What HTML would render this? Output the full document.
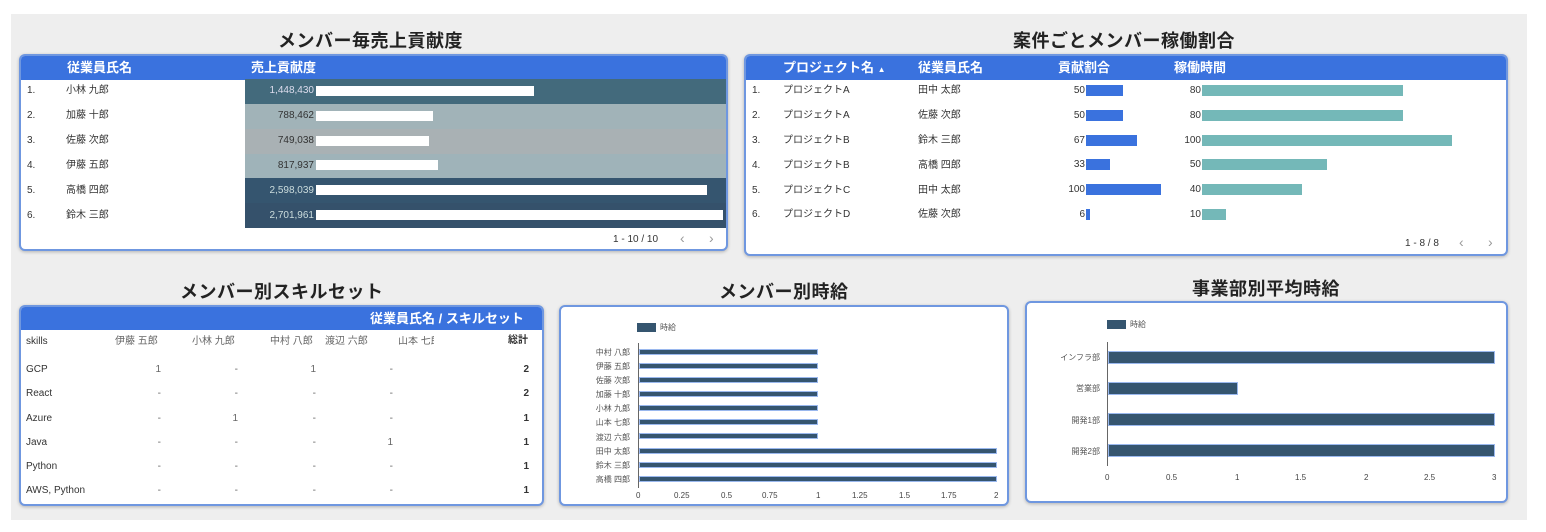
<!DOCTYPE html>
<html><head><meta charset="utf-8"><style>
*{margin:0;padding:0;box-sizing:border-box}
body{width:1546px;height:532px;background:#fff;position:relative;overflow:hidden;font-family:"Liberation Sans","Noto Sans CJK JP",sans-serif;color:#333}
.a{position:absolute;white-space:nowrap}
.bg{left:11px;top:14px;width:1516px;height:506px;background:#eeeeee}
.panel{background:#fff;border:2px solid #6f97e0;border-radius:6px;box-shadow:0 1px 3px rgba(0,0,0,.25);overflow:hidden}
.hd{background:#3a72de;color:#fff;font-weight:bold;font-size:13px}
.t{font-size:18px;font-weight:bold;color:#222;letter-spacing:0.5px}
.s{font-size:10px;color:#333;line-height:12px}
.r{text-align:right}
.h{color:#fff;font-weight:bold;font-size:13px;line-height:16px}
</style></head><body>
<div class="a bg"></div>

<div class="a t" style="left:278px;top:27px">メンバー毎売上貢献度</div>
<div class="a t" style="left:1013px;top:27px">案件ごとメンバー稼働割合</div>
<div class="a t" style="left:180px;top:278px">メンバー別スキルセット</div>
<div class="a t" style="left:719px;top:278px">メンバー別時給</div>
<div class="a t" style="left:1192px;top:275px">事業部別平均時給</div>

<!-- panel 1 -->
<div class="a panel" style="left:19px;top:54px;width:709px;height:197px">
 <div class="a hd" style="left:0;top:0;width:709px;height:24px"></div>
</div>
<div class="a h" style="left:67px;top:60px">従業員氏名</div>
<div class="a h" style="left:251px;top:60px">売上貢献度</div>
<div class="a" style="left:245px;top:79px;width:481px;height:25px;background:#436a7c"></div>
<div class="a" style="left:245px;top:104px;width:481px;height:25px;background:#a1b3b8"></div>
<div class="a" style="left:245px;top:129px;width:481px;height:25px;background:#a9b1b4"></div>
<div class="a" style="left:245px;top:154px;width:481px;height:24px;background:#9fb3b9"></div>
<div class="a" style="left:245px;top:178px;width:481px;height:25px;background:#35556f"></div>
<div class="a" style="left:245px;top:203px;width:481px;height:25px;background:#35516b"></div>
<div class="a s" style="left:27px;top:85px">1.</div><div class="a s" style="left:66px;top:85px">小林 九郎</div>
<div class="a s" style="left:27px;top:110px">2.</div><div class="a s" style="left:66px;top:110px">加藤 十郎</div>
<div class="a s" style="left:27px;top:135px">3.</div><div class="a s" style="left:66px;top:135px">佐藤 次郎</div>
<div class="a s" style="left:27px;top:160px">4.</div><div class="a s" style="left:66px;top:160px">伊藤 五郎</div>
<div class="a s" style="left:27px;top:185px">5.</div><div class="a s" style="left:66px;top:185px">高橋 四郎</div>
<div class="a s" style="left:27px;top:210px">6.</div><div class="a s" style="left:66px;top:210px">鈴木 三郎</div>
<div class="a s r" style="left:245px;width:69px;top:85px;color:#dde">1,448,430</div>
<div class="a s r" style="left:245px;width:69px;top:110px">788,462</div>
<div class="a s r" style="left:245px;width:69px;top:135px">749,038</div>
<div class="a s r" style="left:245px;width:69px;top:160px">817,937</div>
<div class="a s r" style="left:245px;width:69px;top:185px;color:#cdd">2,598,039</div>
<div class="a s r" style="left:245px;width:69px;top:210px;color:#cdd">2,701,961</div>
<div class="a" style="left:316px;top:86px;width:218px;height:10px;background:#fff"></div>
<div class="a" style="left:316px;top:111px;width:117px;height:10px;background:#fff"></div>
<div class="a" style="left:316px;top:136px;width:113px;height:10px;background:#fff"></div>
<div class="a" style="left:316px;top:160px;width:122px;height:10px;background:#fff"></div>
<div class="a" style="left:316px;top:185px;width:391px;height:10px;background:#fff"></div>
<div class="a" style="left:316px;top:210px;width:407px;height:10px;background:#fff"></div>
<div class="a s" style="left:613px;top:234px">1 - 10 / 10</div>
<div class="a" style="left:680px;top:230px;font-size:14px;color:#999">‹</div>
<div class="a" style="left:709px;top:230px;font-size:14px;color:#999">›</div>

<!-- panel 2 -->
<div class="a panel" style="left:744px;top:54px;width:764px;height:202px">
 <div class="a hd" style="left:0;top:0;width:764px;height:24px"></div>
</div>
<div class="a h" style="left:783px;top:60px">プロジェクト名 <span style="font-size:8px">▲</span></div>
<div class="a h" style="left:918px;top:60px">従業員氏名</div>
<div class="a h" style="left:1058px;top:60px">貢献割合</div>
<div class="a h" style="left:1174px;top:60px">稼働時間</div>
<div class="a s" style="left:752px;top:85px">1.</div><div class="a s" style="left:783px;top:85px">プロジェクトA</div><div class="a s" style="left:918px;top:85px">田中 太郎</div>
<div class="a s" style="left:752px;top:110px">2.</div><div class="a s" style="left:783px;top:110px">プロジェクトA</div><div class="a s" style="left:918px;top:110px">佐藤 次郎</div>
<div class="a s" style="left:752px;top:135px">3.</div><div class="a s" style="left:783px;top:135px">プロジェクトB</div><div class="a s" style="left:918px;top:135px">鈴木 三郎</div>
<div class="a s" style="left:752px;top:160px">4.</div><div class="a s" style="left:783px;top:160px">プロジェクトB</div><div class="a s" style="left:918px;top:160px">高橋 四郎</div>
<div class="a s" style="left:752px;top:185px">5.</div><div class="a s" style="left:783px;top:185px">プロジェクトC</div><div class="a s" style="left:918px;top:185px">田中 太郎</div>
<div class="a s" style="left:752px;top:209px">6.</div><div class="a s" style="left:783px;top:209px">プロジェクトD</div><div class="a s" style="left:918px;top:209px">佐藤 次郎</div>
<div class="a s r" style="left:1044px;width:41px;top:85px">50</div>
<div class="a s r" style="left:1044px;width:41px;top:110px">50</div>
<div class="a s r" style="left:1044px;width:41px;top:135px">67</div>
<div class="a s r" style="left:1044px;width:41px;top:159px">33</div>
<div class="a s r" style="left:1044px;width:41px;top:184px">100</div>
<div class="a s r" style="left:1044px;width:41px;top:209px">6</div>
<div class="a" style="left:1086px;top:85px;width:37px;height:11px;background:#3a72de"></div>
<div class="a" style="left:1086px;top:110px;width:37px;height:11px;background:#3a72de"></div>
<div class="a" style="left:1086px;top:135px;width:51px;height:11px;background:#3a72de"></div>
<div class="a" style="left:1086px;top:159px;width:24px;height:11px;background:#3a72de"></div>
<div class="a" style="left:1086px;top:184px;width:75px;height:11px;background:#3a72de"></div>
<div class="a" style="left:1086px;top:209px;width:4px;height:11px;background:#3a72de"></div>
<div class="a s r" style="left:1160px;width:41px;top:85px">80</div>
<div class="a s r" style="left:1160px;width:41px;top:110px">80</div>
<div class="a s r" style="left:1160px;width:41px;top:135px">100</div>
<div class="a s r" style="left:1160px;width:41px;top:159px">50</div>
<div class="a s r" style="left:1160px;width:41px;top:184px">40</div>
<div class="a s r" style="left:1160px;width:41px;top:209px">10</div>
<div class="a" style="left:1202px;top:85px;width:201px;height:11px;background:#74b8b8"></div>
<div class="a" style="left:1202px;top:110px;width:201px;height:11px;background:#74b8b8"></div>
<div class="a" style="left:1202px;top:135px;width:250px;height:11px;background:#74b8b8"></div>
<div class="a" style="left:1202px;top:159px;width:125px;height:11px;background:#74b8b8"></div>
<div class="a" style="left:1202px;top:184px;width:100px;height:11px;background:#74b8b8"></div>
<div class="a" style="left:1202px;top:209px;width:24px;height:11px;background:#74b8b8"></div>
<div class="a s" style="left:1405px;top:238px">1 - 8 / 8</div>
<div class="a" style="left:1459px;top:234px;font-size:14px;color:#999">‹</div>
<div class="a" style="left:1488px;top:234px;font-size:14px;color:#999">›</div>

<!-- panel 3 -->
<div class="a panel" style="left:19px;top:305px;width:525px;height:201px">
 <div class="a hd" style="left:0;top:0;width:525px;height:23px"></div>
</div>
<div class="a h" style="left:370px;top:311px">従業員氏名 / スキルセット</div>
<div class="a s" style="left:26px;top:336px">skills</div>
<div class="a s" style="left:115px;top:336px;color:#666">伊藤 五郎</div>
<div class="a s" style="left:192px;top:336px;color:#666">小林 九郎</div>
<div class="a s" style="left:270px;top:336px;color:#666">中村 八郎</div>
<div class="a s" style="left:325px;top:336px;color:#666;width:42px;text-align:right">渡辺 六郎</div>
<div class="a s" style="left:398px;top:336px;color:#666;width:36px;overflow:hidden">山本 七郎</div>
<div class="a s" style="left:508px;top:335px;font-weight:bold">総計</div>
<div class="a s" style="left:26px;top:358px;line-height:24.3px">GCP<br>React<br>Azure<br>Java<br>Python<br>AWS, Python</div>
<div class="a s r" style="left:120px;width:41px;top:358px;line-height:24.3px;color:#666">1<br>-<br>-<br>-<br>-<br>-</div>
<div class="a s r" style="left:197px;width:41px;top:358px;line-height:24.3px;color:#666">-<br>-<br>1<br>-<br>-<br>-</div>
<div class="a s r" style="left:275px;width:41px;top:358px;line-height:24.3px;color:#666">1<br>-<br>-<br>-<br>-<br>-</div>
<div class="a s r" style="left:352px;width:41px;top:358px;line-height:24.3px;color:#666">-<br>-<br>-<br>1<br>-<br>-</div>
<div class="a s r" style="left:488px;width:41px;top:358px;line-height:24.3px;font-weight:bold">2<br>2<br>1<br>1<br>1<br>1</div>

<!-- panel 4 -->
<div class="a panel" style="left:559px;top:305px;width:450px;height:201px"></div>
<div class="a" style="left:637px;top:323px;width:19px;height:9px;background:#35556f"></div>
<div class="a" style="left:660px;top:322px;font-size:8px;color:#555">時給</div>
<div class="a" style="left:638px;top:343px;width:1px;height:145px;background:#666"></div>
<div class="a" style="left:560px;top:346px;width:70px;font-size:8px;color:#555;text-align:right;line-height:14.1px">中村 八郎<br>伊藤 五郎<br>佐藤 次郎<br>加藤 十郎<br>小林 九郎<br>山本 七郎<br>渡辺 六郎<br>田中 太郎<br>鈴木 三郎<br>高橋 四郎</div>
<div class="a" style="left:639px;top:349px">
<div style="position:relative">
<div class="a" style="top:0;width:179px;height:6px;background:#35556f;border:1.5px solid #9ab8ee"></div>
<div class="a" style="top:14px;width:179px;height:6px;background:#35556f;border:1.5px solid #9ab8ee"></div>
<div class="a" style="top:28px;width:179px;height:6px;background:#35556f;border:1.5px solid #9ab8ee"></div>
<div class="a" style="top:42px;width:179px;height:6px;background:#35556f;border:1.5px solid #9ab8ee"></div>
<div class="a" style="top:56px;width:179px;height:6px;background:#35556f;border:1.5px solid #9ab8ee"></div>
<div class="a" style="top:70px;width:179px;height:6px;background:#35556f;border:1.5px solid #9ab8ee"></div>
<div class="a" style="top:84px;width:179px;height:6px;background:#35556f;border:1.5px solid #9ab8ee"></div>
<div class="a" style="top:99px;width:358px;height:6px;background:#35556f;border:1.5px solid #9ab8ee"></div>
<div class="a" style="top:113px;width:358px;height:6px;background:#35556f;border:1.5px solid #9ab8ee"></div>
<div class="a" style="top:127px;width:358px;height:6px;background:#35556f;border:1.5px solid #9ab8ee"></div>
</div></div>
<div class="a" style="left:636px;top:491px;font-size:8px;color:#444">0</div>
<div class="a" style="left:674px;top:491px;font-size:8px;color:#444">0.25</div>
<div class="a" style="left:721px;top:491px;font-size:8px;color:#444">0.5</div>
<div class="a" style="left:762px;top:491px;font-size:8px;color:#444">0.75</div>
<div class="a" style="left:816px;top:491px;font-size:8px;color:#444">1</div>
<div class="a" style="left:852px;top:491px;font-size:8px;color:#444">1.25</div>
<div class="a" style="left:899px;top:491px;font-size:8px;color:#444">1.5</div>
<div class="a" style="left:941px;top:491px;font-size:8px;color:#444">1.75</div>
<div class="a" style="left:994px;top:491px;font-size:8px;color:#444">2</div>

<!-- panel 5 -->
<div class="a panel" style="left:1025px;top:301px;width:483px;height:202px"></div>
<div class="a" style="left:1107px;top:320px;width:19px;height:9px;background:#35556f"></div>
<div class="a" style="left:1130px;top:319px;font-size:8px;color:#555">時給</div>
<div class="a" style="left:1107px;top:342px;width:1px;height:124px;background:#666"></div>
<div class="a" style="left:1030px;top:352px;width:70px;font-size:8px;color:#555;text-align:right">インフラ部</div>
<div class="a" style="left:1030px;top:383px;width:70px;font-size:8px;color:#555;text-align:right">営業部</div>
<div class="a" style="left:1030px;top:415px;width:70px;font-size:8px;color:#555;text-align:right">開発1部</div>
<div class="a" style="left:1030px;top:446px;width:70px;font-size:8px;color:#555;text-align:right">開発2部</div>
<div class="a" style="left:1108px;top:351px;width:387px;height:13px;background:#35556f;border:1px solid #9ab8ee"></div>
<div class="a" style="left:1108px;top:382px;width:130px;height:13px;background:#35556f;border:1px solid #9ab8ee"></div>
<div class="a" style="left:1108px;top:413px;width:387px;height:13px;background:#35556f;border:1px solid #9ab8ee"></div>
<div class="a" style="left:1108px;top:444px;width:387px;height:13px;background:#35556f;border:1px solid #9ab8ee"></div>
<div class="a" style="left:1105px;top:473px;font-size:8px;color:#444">0</div>
<div class="a" style="left:1166px;top:473px;font-size:8px;color:#444">0.5</div>
<div class="a" style="left:1235px;top:473px;font-size:8px;color:#444">1</div>
<div class="a" style="left:1295px;top:473px;font-size:8px;color:#444">1.5</div>
<div class="a" style="left:1364px;top:473px;font-size:8px;color:#444">2</div>
<div class="a" style="left:1424px;top:473px;font-size:8px;color:#444">2.5</div>
<div class="a" style="left:1492px;top:473px;font-size:8px;color:#444">3</div>
</body></html>
